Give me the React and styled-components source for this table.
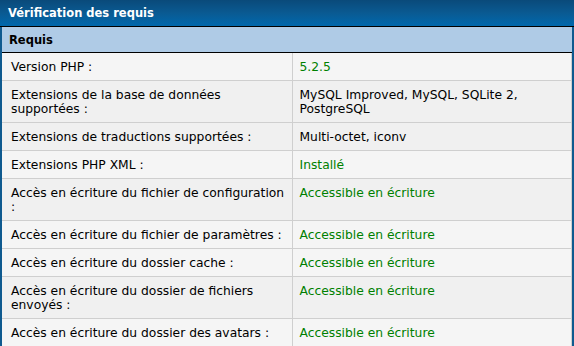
import styled, { createGlobalStyle } from "styled-components";

const GlobalStyle = createGlobalStyle`
  html, body {
    margin: 0;
    padding: 0;
    background: #ffffff;
  }
  body {
    font-family: "DejaVu Sans", Verdana, sans-serif;
  }
`;

const Panel = styled.div`
  width: 574px;
  box-sizing: border-box;
  border-left: 2px solid #0f5a8f;
  border-right: 2px solid #0f5a8f;
`;

const TitleBar = styled.div`
  height: 26px;
  margin: 0 -2px;
  padding: 0 8px;
  display: flex;
  align-items: center;
  background: linear-gradient(to bottom, #0a4a7a 0%, #0a5a92 50%, #0068ad 100%);
  border-bottom: 1px solid #000;
  color: #fff;
  font-size: 11.5px;
  font-weight: bold;
`;

const SectionHead = styled.div`
  height: 25px;
  padding: 0 7px;
  display: flex;
  align-items: center;
  background: #afcbe6;
  border-bottom: 1px solid #000;
  color: #000;
  font-size: 11.5px;
  font-weight: bold;
`;

const Table = styled.table`
  width: 100%;
  border-collapse: collapse;
  table-layout: fixed;
  font-size: 12.3px;
  line-height: 14px;
`;

const Row = styled.tr`
  background: ${p => (p.$dark ? "#f0f0f0" : "#f5f5f5")};
  border-bottom: 1px solid #cfcfcf;
`;

const LabelCell = styled.td`
  width: 290px;
  box-sizing: border-box;
  padding: 7px 1px 6px 9px;
  vertical-align: top;
  color: #000;
  border-right: 1px solid #cfcfcf;
`;

const ValueCell = styled.td`
  padding: 7px 8px 6px 7px;
  vertical-align: top;
  color: ${p => (p.$ok ? "#008000" : "#000")};
  border-right: 1px solid #cfcfcf;
`;

const rows = [
  { label: "Version PHP :", value: "5.2.5", ok: true, dark: false },
  { label: "Extensions de la base de données supportées :", value: "MySQL Improved, MySQL, SQLite 2, PostgreSQL", ok: false, dark: true },
  { label: "Extensions de traductions supportées :", value: "Multi-octet, iconv", ok: false, dark: true },
  { label: "Extensions PHP XML :", value: "Installé", ok: true, dark: false },
  { label: "Accès en écriture du fichier de configuration :", value: "Accessible en écriture", ok: true, dark: true },
  { label: "Accès en écriture du fichier de paramètres :", value: "Accessible en écriture", ok: true, dark: false },
  { label: "Accès en écriture du dossier cache :", value: "Accessible en écriture", ok: true, dark: false },
  { label: "Accès en écriture du dossier de fichiers envoyés :", value: "Accessible en écriture", ok: true, dark: true },
  { label: "Accès en écriture du dossier des avatars :", value: "Accessible en écriture", ok: true, dark: false },
];

export default function App() {
  return (
    <>
      <GlobalStyle />
      <Panel>
        <TitleBar>Vérification des requis</TitleBar>
        <SectionHead>Requis</SectionHead>
        <Table>
          <tbody>
            {rows.map((r) => (
              <Row key={r.label} $dark={r.dark}>
                <LabelCell>{r.label}</LabelCell>
                <ValueCell $ok={r.ok}>{r.value}</ValueCell>
              </Row>
            ))}
          </tbody>
        </Table>
      </Panel>
    </>
  );
}
